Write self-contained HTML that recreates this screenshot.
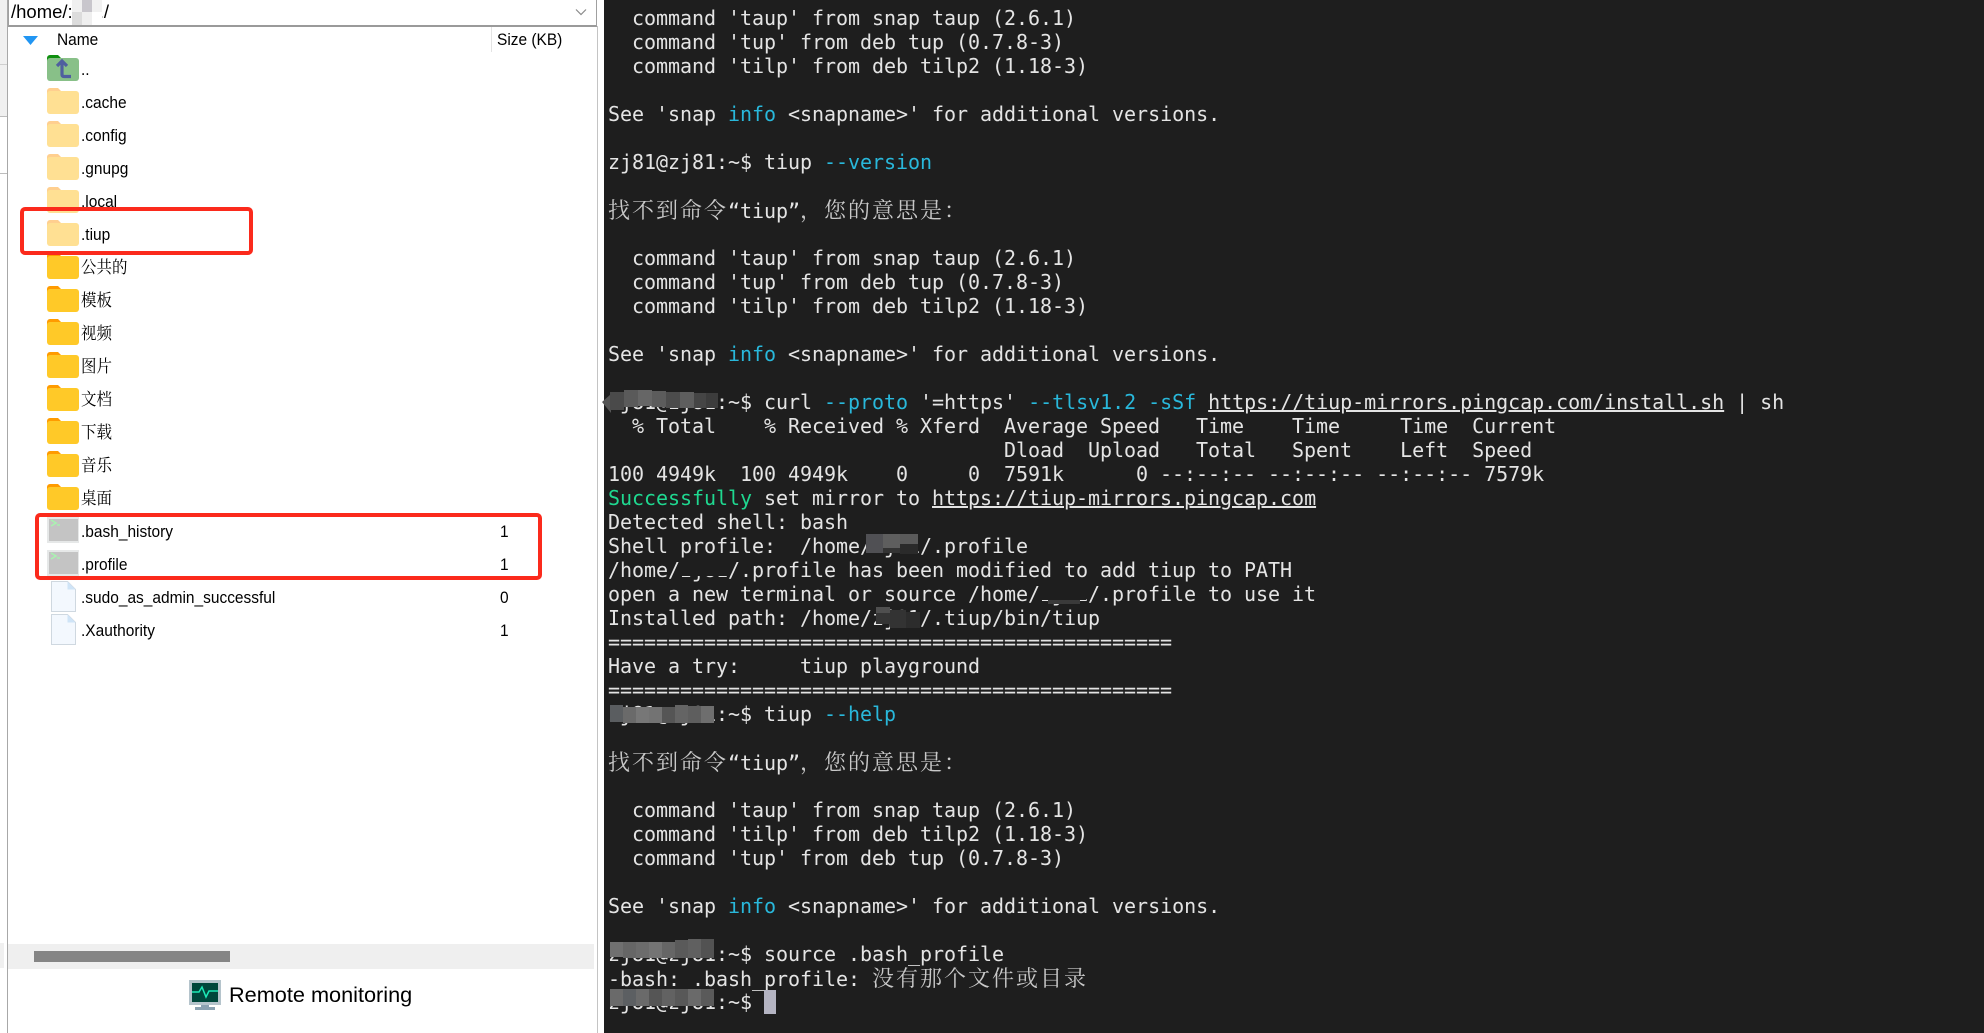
<!DOCTYPE html>
<html lang="zh"><head><meta charset="utf-8"><title>Remote session</title>
<style>
html,body{margin:0;padding:0;width:1984px;height:1033px;overflow:hidden;background:#fff}
.abs{position:absolute}
#term{position:absolute;left:604px;top:0;width:1380px;height:1033px;background:#1e1e1e}
#lines{position:absolute;left:608px;top:6px;height:1008px;overflow:hidden;font:20px/24px "DejaVu Sans Mono","Noto Sans CJK SC",monospace;letter-spacing:-.04px;color:#e4e4e4}
#lines div{height:24px;white-space:pre}
.b{color:#29b8db}.g{color:#1fd890}.u{text-decoration:underline}
.c{font-family:"Noto Serif CJK SC","Liberation Serif",serif;font-size:22px;letter-spacing:2px;color:#c8c8c8;font-weight:400}
.r{position:absolute;left:81px;height:33px;font:17px/33px "Liberation Sans","Noto Serif CJK SC",sans-serif;color:#000;transform:scaleX(.91);transform-origin:0 50%;white-space:nowrap}
.s{position:absolute;left:500px;height:33px;font:17px/33px "Liberation Sans",sans-serif;color:#000;transform:scaleX(.91);transform-origin:0 50%}
svg.i{position:absolute;left:47px;width:32px;height:28px}
.red{position:absolute;border:4.5px solid #fb2a1c;border-radius:5px;box-sizing:border-box}
</style></head><body>
<svg width="0" height="0" style="position:absolute">
<symbol id="fl" viewBox="0 0 32 28"><path d="M0 3a3 3 0 0 1 3-3h8l3 3v6H0z" fill="#ffcf8f"/><rect y="3" width="32" height="23" rx="3" fill="#ffe093"/></symbol>
<symbol id="fd" viewBox="0 0 32 28"><path d="M0 3a3 3 0 0 1 3-3h8l3 3v6H0z" fill="#ff9b00"/><rect y="3" width="32" height="23" rx="3" fill="#ffc928"/></symbol>
<symbol id="sh" viewBox="0 0 32 28"><rect width="32" height="26" fill="#e6e8e8"/><rect x="2" y="2" width="29" height="22" fill="#c4c4c4"/><path d="M4 3l5 3-5 3" fill="none" stroke="#a9f3b0" stroke-width="1.6"/><path d="M10 8h3" stroke="#a9f3b0" stroke-width="1.4"/></symbol>
<symbol id="dc" viewBox="0 0 32 32"><path d="M4.5.5h16l8 8v22h-24z" fill="#f3f8fe" stroke="#cfd8e0"/><path d="M20.5 .5v8h8z" fill="#cfe4f7"/></symbol>
</svg>

<!-- left chrome -->
<div class="abs" style="left:0;top:0;width:7px;height:116px;background:#f0f0f0;border-bottom:1px solid #bdbdbd"></div>
<div class="abs" style="left:0;top:64px;width:7px;height:1px;background:#cfcfcf"></div>
<div class="abs" style="left:0;top:173px;width:7px;height:1px;background:#bdbdbd"></div>
<div class="abs" style="left:7px;top:0;width:1px;height:1033px;background:#a8a8a8"></div>
<div class="abs" style="left:597px;top:26px;width:1px;height:1007px;background:#c4c4c4"></div>
<div class="abs" style="left:8px;top:-2px;width:587px;height:27px;border:1px solid #a0a0a0;border-top:0;border-bottom:2px solid #9a9a9a;background:#fff"></div>
<div class="abs" style="left:11px;top:0;font:18.5px/24px 'Liberation Sans',sans-serif;color:#000">/home/:<span style="margin-left:26px">.</span>/</div>
<svg class="abs" style="left:72px;top:0" width="30" height="25"><rect width="30" height="25" fill="#e8e8e8"/><rect x="0" width="10" height="12" fill="#f0f0f0"/><rect x="10" width="10" height="12" fill="#c8c6cc"/><rect x="20" width="10" height="12" fill="#f1f1f1"/><rect x="0" y="12" width="10" height="13" fill="#dcdcdc"/><rect x="10" y="12" width="10" height="13" fill="#efefef"/><rect x="20" y="12" width="10" height="13" fill="#fff"/></svg>
<svg class="abs" style="left:575px;top:8px" width="12" height="9"><path d="M1 1.5l5 5 5-5" fill="none" stroke="#8a8a8a" stroke-width="1.2"/></svg>

<!-- header -->
<svg class="abs" style="left:23px;top:36px" width="15" height="9"><path d="M0 0h15L7.5 9z" fill="#2196f3"/></svg>
<div class="r" style="left:57px;top:23px">Name</div>
<div class="abs" style="left:491px;top:27px;width:1px;height:25px;background:#e3e3e3"></div>
<div class="r" style="left:497px;top:23px">Size (KB)</div>

<!-- rows -->
<svg class="i" style="top:55px;height:28px" viewBox="0 0 32 28"><path d="M0 3a3 3 0 0 1 3-3h8l3 3v6H0z" fill="#0f8f0f"/><rect y="3" width="32" height="23" rx="3" fill="#88c088"/><path d="M10 11l5-5 5 5M15 7v12.5q0 2 2 2h7" fill="none" stroke="#4f5f9f" stroke-width="3.2"/></svg>
<div class="r" style="top:53px">..</div>
<svg class="i" style="top:88px"><use href="#fl"/></svg><div class="r" style="top:86px">.cache</div>
<svg class="i" style="top:121px"><use href="#fl"/></svg><div class="r" style="top:119px">.config</div>
<svg class="i" style="top:154px"><use href="#fl"/></svg><div class="r" style="top:152px">.gnupg</div>
<svg class="i" style="top:187px"><use href="#fl"/></svg><div class="r" style="top:185px">.local</div>
<svg class="i" style="top:220px"><use href="#fl"/></svg><div class="r" style="top:218px">.tiup</div>
<svg class="i" style="top:253px"><use href="#fd"/></svg><div class="r" style="top:251px">公共的</div>
<svg class="i" style="top:286px"><use href="#fd"/></svg><div class="r" style="top:284px">模板</div>
<svg class="i" style="top:319px"><use href="#fd"/></svg><div class="r" style="top:317px">视频</div>
<svg class="i" style="top:352px"><use href="#fd"/></svg><div class="r" style="top:350px">图片</div>
<svg class="i" style="top:385px"><use href="#fd"/></svg><div class="r" style="top:383px">文档</div>
<svg class="i" style="top:418px"><use href="#fd"/></svg><div class="r" style="top:416px">下载</div>
<svg class="i" style="top:451px"><use href="#fd"/></svg><div class="r" style="top:449px">音乐</div>
<svg class="i" style="top:484px"><use href="#fd"/></svg><div class="r" style="top:482px">桌面</div>
<svg class="i" style="top:517px"><use href="#sh"/></svg><div class="r" style="top:515px">.bash_history</div><div class="s" style="top:515px">1</div>
<svg class="i" style="top:550px"><use href="#sh"/></svg><div class="r" style="top:548px">.profile</div><div class="s" style="top:548px">1</div>
<svg class="i" style="top:581px;height:32px"><use href="#dc"/></svg><div class="r" style="top:581px">.sudo_as_admin_successful</div><div class="s" style="top:581px">0</div>
<svg class="i" style="top:614px;height:32px"><use href="#dc"/></svg><div class="r" style="top:614px">.Xauthority</div><div class="s" style="top:614px">1</div>

<div class="red" style="left:20px;top:207px;width:233px;height:48px"></div>
<div class="red" style="left:35px;top:513px;width:507px;height:67px"></div>

<!-- scrollbar + footer -->
<div class="abs" style="left:0;top:943px;width:4px;height:25px;background:#f0f0f0"></div>
<div class="abs" style="left:8px;top:944px;width:586px;height:25px;background:#efefef"></div>
<div class="abs" style="left:34px;top:951px;width:196px;height:11px;background:#858585"></div>
<svg class="abs" style="left:189px;top:980px" width="32" height="30" viewBox="0 0 32 30"><rect width="32" height="25" fill="#b5c4cc"/><rect x="3" y="3" width="26" height="19" fill="#00473c"/><path d="M3 12h7l3-5 4 10 3-6h9" fill="none" stroke="#1de9b6" stroke-width="1.5"/><rect x="12" y="25" width="8" height="3" fill="#8ba2b2"/><rect x="6" y="27" width="20" height="3" fill="#8ba2b2"/></svg>
<div class="abs" style="left:229px;top:982px;font:21.7px/26px 'Liberation Sans',sans-serif;color:#000;white-space:nowrap">Remote monitoring</div>

<!-- terminal -->
<div id="term"></div>
<div id="lines"><div>  command 'taup' from snap taup (2.6.1)</div><div>  command 'tup' from deb tup (0.7.8-3)</div><div>  command 'tilp' from deb tilp2 (1.18-3)</div><div> </div><div>See 'snap <span class="b">info</span> &lt;snapname&gt;' for additional versions.</div><div> </div><div>zj81@zj81:~$ tiup <span class="b">--version</span></div><div> </div><div><span class="c">找不到命令</span>“tiup”<span class="c">，您的意思是：</span></div><div> </div><div>  command 'taup' from snap taup (2.6.1)</div><div>  command 'tup' from deb tup (0.7.8-3)</div><div>  command 'tilp' from deb tilp2 (1.18-3)</div><div> </div><div>See 'snap <span class="b">info</span> &lt;snapname&gt;' for additional versions.</div><div> </div><div>zj81@zj81:~$ curl <span class="b">--proto</span> '=https' <span class="b">--tlsv1.2</span> <span class="b">-sSf</span> <span class="u">https://tiup-mirrors.pingcap.com/install.sh</span> | sh</div><div>  % Total    % Received % Xferd  Average Speed   Time    Time     Time  Current</div><div>                                 Dload  Upload   Total   Spent    Left  Speed</div><div>100 4949k  100 4949k    0     0  7591k      0 --:--:-- --:--:-- --:--:-- 7579k</div><div><span class="g">Successfully</span> set mirror to <span class="u">https://tiup-mirrors.pingcap.com</span></div><div>Detected shell: bash</div><div>Shell profile:  /home/zj81/.profile</div><div>/home/zj81/.profile has been modified to add tiup to PATH</div><div>open a new terminal or source /home/zj81/.profile to use it</div><div>Installed path: /home/zj81/.tiup/bin/tiup</div><div>===============================================</div><div>Have a try:     tiup playground</div><div>===============================================</div><div>zj81@zj81:~$ tiup <span class="b">--help</span></div><div> </div><div><span class="c">找不到命令</span>“tiup”<span class="c">，您的意思是：</span></div><div> </div><div>  command 'taup' from snap taup (2.6.1)</div><div>  command 'tilp' from deb tilp2 (1.18-3)</div><div>  command 'tup' from deb tup (0.7.8-3)</div><div> </div><div>See 'snap <span class="b">info</span> &lt;snapname&gt;' for additional versions.</div><div> </div><div>zj81@zj81:~$ source .bash_profile</div><div>-bash: .bash_profile: <span class="c">没有那个文件或目录</span></div><div>zj81@zj81:~$ </div></div>

<!-- mosaics -->
<svg class="abs" style="left:0;top:0" width="1984" height="1033">
<g>
<path d="M602 402l9-8v19z" fill="#555"/>
<rect x="610" y="392" width="14" height="18" fill="#4a4a4a"/><rect x="624" y="390" width="14" height="17" fill="#5a5a5a"/><rect x="638" y="390" width="14" height="16" fill="#666"/><rect x="652" y="391" width="14" height="16" fill="#5c5c5c"/><rect x="666" y="392" width="14" height="16" fill="#4c4c4c"/><rect x="680" y="392" width="14" height="16" fill="#5e5e5e"/><rect x="694" y="393" width="12" height="15" fill="#454545"/><rect x="706" y="393" width="12" height="15" fill="#3c3c3c"/>
</g>
<g>
<rect x="866" y="534" width="17" height="19" fill="#505054"/><rect x="883" y="534" width="17" height="14" fill="#5e5e5e"/><rect x="900" y="534" width="18" height="10" fill="#5a5a5a"/><rect x="883" y="548" width="17" height="5" fill="#333"/><rect x="900" y="544" width="18" height="10" fill="#2a2a2a"/>
</g>
<g>
<rect x="681" y="558" width="48" height="18" fill="#1e1e1e"/>
<rect x="1040" y="584" width="46" height="16" fill="#1e1e1e"/><rect x="1048" y="600" width="32" height="4" fill="#3a3a3a"/>
</g>
<g>
<rect x="876" y="607" width="14" height="6" fill="#4f4f4f"/><rect x="876" y="613" width="14" height="11" fill="#353535"/><rect x="890" y="610" width="16" height="18" fill="#333"/><rect x="906" y="612" width="14" height="16" fill="#2c2c2c"/><rect x="890" y="628" width="30" height="7" fill="#1e1e1e"/>
</g>
<g>
<rect x="610" y="705" width="13" height="17" fill="#5a5d60"/><rect x="623" y="707" width="13" height="16" fill="#6a6a6a"/><rect x="636" y="707" width="13" height="16" fill="#777"/><rect x="649" y="707" width="13" height="16" fill="#737373"/><rect x="662" y="707" width="13" height="16" fill="#555"/><rect x="675" y="705" width="13" height="18" fill="#646464"/><rect x="688" y="706" width="13" height="17" fill="#5e5e5e"/><rect x="701" y="706" width="13" height="17" fill="#6e6e6e"/>
</g>
<g>
<rect x="610" y="942" width="13" height="15" fill="#707070"/><rect x="623" y="942" width="13" height="16" fill="#666"/><rect x="636" y="942" width="13" height="16" fill="#6c6c6c"/><rect x="649" y="942" width="13" height="16" fill="#747474"/><rect x="662" y="942" width="13" height="16" fill="#666"/><rect x="675" y="940" width="13" height="18" fill="#5a5a5a"/><rect x="688" y="939" width="13" height="19" fill="#606060"/><rect x="701" y="939" width="13" height="19" fill="#525252"/>
</g>
<g>
<rect x="610" y="989" width="13" height="17" fill="#6a6a6a"/><rect x="623" y="989" width="13" height="17" fill="#5c5f62"/><rect x="636" y="989" width="13" height="17" fill="#6a6a6a"/><rect x="649" y="989" width="13" height="17" fill="#555"/><rect x="662" y="989" width="13" height="17" fill="#626262"/><rect x="675" y="989" width="13" height="17" fill="#585858"/><rect x="688" y="989" width="13" height="17" fill="#6a6a6a"/><rect x="701" y="989" width="13" height="17" fill="#5a5a5a"/>
</g>
<rect x="764" y="990" width="12" height="24" fill="#b4b4c2"/>
</svg>
</body></html>
